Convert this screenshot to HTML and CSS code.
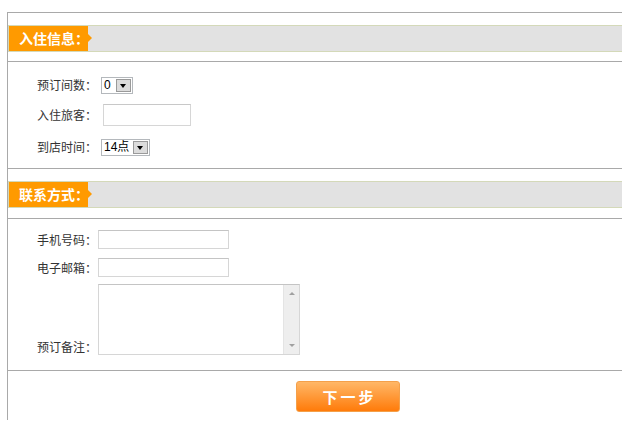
FILE: index.html
```
<!DOCTYPE html>
<html>
<head>
  <meta charset="UTF-8">
  <title>入住信息</title>
  <link rel="stylesheet" href="styles.css">
</head>
<body>
  <div class="page">
    <div class="title"><span class="tag">入住信息：</span></div>
    <div class="fields first">
      <div class="row r1">
        <label>预订间数：</label>
        <span class="select"><span class="val">0</span><span class="arrow"></span></span>
      </div>
      <div class="row r2">
        <label>入住旅客：</label>
        <input type="text" class="guest">
      </div>
      <div class="row r3">
        <label>到店时间：</label>
        <span class="select"><span class="val">14点</span><span class="arrow"></span></span>
      </div>
    </div>

    <div class="title"><span class="tag">联系方式：</span></div>
    <div class="fields second">
      <div class="row">
        <label>手机号码：</label>
        <input type="text" class="text">
      </div>
      <div class="row">
        <label>电子邮箱：</label>
        <input type="text" class="text">
      </div>
      <div class="row bottom">
        <label>预订备注：</label>
        <div class="memo">
          <textarea></textarea>
          <div class="scroll"><span class="up"></span><span class="down"></span></div>
        </div>
      </div>
    </div>

    <div class="actions">
      <button class="next">下一步</button>
    </div>
  </div>
</body>
</html>
```
FILE: styles.css
```
body {
  margin: 0;
  font-family: "Noto Sans CJK SC", "Liberation Sans", sans-serif;
  font-size: 12px;
  color: #333;
  background: #fff;
}

.page {
  margin: 12px 0 0 7px;
  border-left: 1px solid #a9a9a9;
  border-top: 1px solid #a9a9a9;
  padding-bottom: 8px;
}

.title {
  margin-top: 12px;
  height: 25px;
  background: #e2e2e2;
  border: 1px solid #d4d9b9;
  border-right: none;
  display: flex;
}

.tag {
  position: relative;
  width: 69px;
  padding-left: 10px;
  background: #ff9a00;
  color: #fff;
  font-weight: bold;
  font-size: 14px;
  line-height: 25px;
  white-space: nowrap;
}

.tag::after {
  content: "";
  position: absolute;
  right: -4px;
  top: 8px;
  border-left: 4px solid #ff9a00;
  border-top: 4px solid transparent;
  border-bottom: 4px solid transparent;
}

.fields {
  border-top: 1px solid #a9a9a9;
  border-bottom: 1px solid #a9a9a9;
  padding-left: 29px;
}

.fields.first {
  margin-top: 9px;
  padding-top: 8px;
  padding-bottom: 4px;
}

.fields.second {
  margin-top: 10px;
  padding-top: 11px;
  padding-bottom: 15px;
}

.row {
  display: flex;
  align-items: center;
}

.row label {
  width: 64px;
  line-height: 14px;
}

.fields.second .row label {
  width: 61px;
}

.r1 { height: 30px; }
.r2 { height: 30px; }
.r3 { height: 34px; }

.select {
  display: flex;
  align-items: center;
  height: 15px;
  border: 1px solid #b4b8bc;
  background: #fff;
  padding: 0 1px 0 2px;
  font-family: "Liberation Sans", "Noto Sans CJK SC", sans-serif;
  font-size: 12px;
  color: #000;
}

.select .val {
  margin-right: 4px;
  line-height: 15px;
}

.r1 .select .val { margin-right: 5px; }

.arrow {
  position: relative;
  width: 13px;
  height: 11px;
  background: #dcdcdc;
  border: 1px solid #9a9a9a;
}

.arrow::after {
  content: "";
  position: absolute;
  left: 3px;
  top: 4px;
  border-top: 4px solid #000;
  border-left: 3.5px solid transparent;
  border-right: 3.5px solid transparent;
}

input.guest {
  margin-left: 2px;
  width: 86px;
  height: 20px;
  padding: 0;
  border: 1px solid #d6d6d6;
  border-top-color: #c8c8c8;
  box-sizing: content-box;
}

input.text {
  width: 129px;
  height: 17px;
  padding: 0;
  border: 1px solid #d6d6d6;
  border-top-color: #c4c4c4;
}

.fields.second .row:nth-child(1) { margin-bottom: 9px; }
.fields.second .row:nth-child(2) { margin-bottom: 7px; }

.row.bottom {
  align-items: flex-end;
}

.row.bottom label {
  padding-bottom: 1px;
}

.memo {
  display: flex;
  width: 200px;
  height: 69px;
  border: 1px solid #d6d6d6;
  border-top-color: #c4c4c4;
}

.memo textarea {
  flex: 1;
  border: none;
  resize: none;
  padding: 0;
  outline: none;
}

.scroll {
  position: relative;
  width: 15px;
  background: #eeeeee;
  border-left: 1px solid #e4e4e4;
}

.scroll .up,
.scroll .down {
  position: absolute;
  left: 5px;
  border-left: 3px solid transparent;
  border-right: 3px solid transparent;
}

.scroll .up {
  top: 7px;
  border-bottom: 3px solid #a0a0a0;
}

.scroll .down {
  bottom: 7px;
  border-top: 3px solid #a0a0a0;
}

.actions {
  padding: 10px 0 0 288px;
}

.next {
  width: 104px;
  height: 31px;
  border: 1px solid #f4a04a;
  border-radius: 3px;
  background: linear-gradient(#ffb767, #ff7b0a);
  color: #fff;
  font-family: "Noto Sans CJK SC", sans-serif;
  font-size: 15px;
  font-weight: bold;
  letter-spacing: 3px;
  padding: 0 0 0 3px;
  cursor: pointer;
}
```
